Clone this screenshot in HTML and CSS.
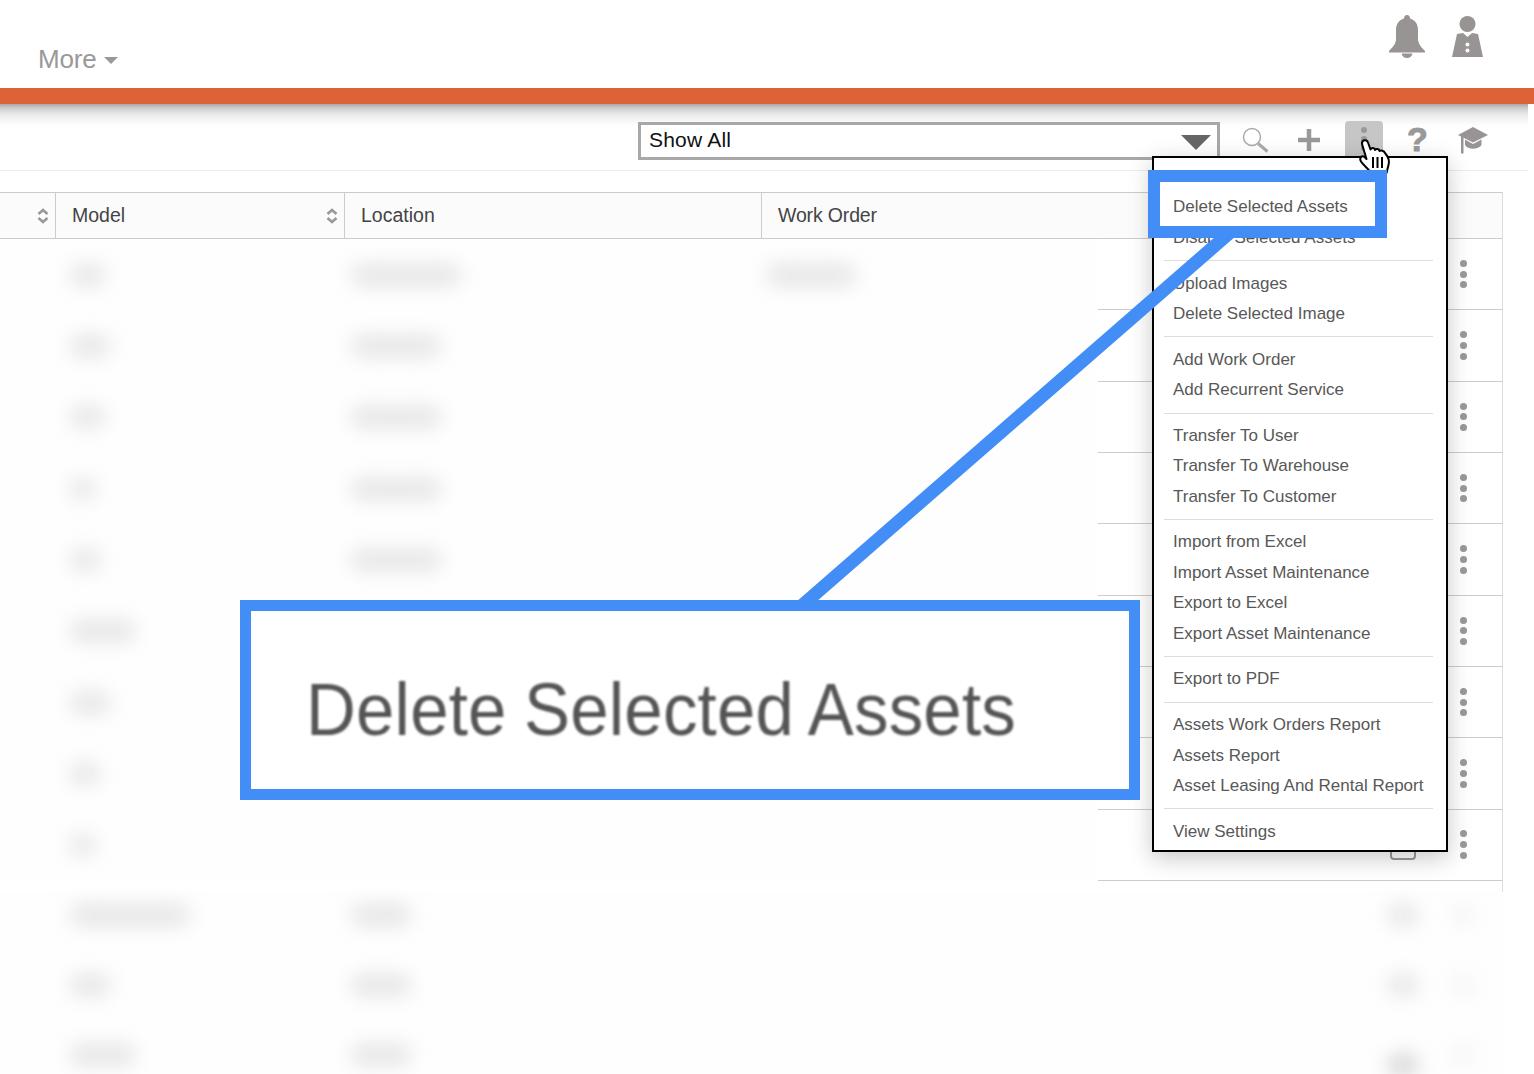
FILE: index.html
```html
<!DOCTYPE html>
<html lang="en">
<head>
<meta charset="utf-8">
<title>Assets</title>
<link rel="stylesheet" href="styles.css">
</head>
<body>
<div class="page">
  <header class="topbar">
    <div class="more">More <span class="caret"></span></div>
    <div class="top-icons">
      <svg class="bell" width="36" height="43" viewBox="0 0 36 43"><path d="M18 0C20 0 21 1.500 21 3.500C26 5 29 9 29 15L29 24C29 29 33 33 36 36L36 37.500L0 37.500L0 36C3 33 7 29 7 24L7 15C7 9 10 5 15 3.500C15 1.500 16 0 18 0Z"/><path d="M12.500 38.500H23.500C23 41 21 43 18 43C15 43 13 41 12.500 38.500Z"/></svg>
      <svg class="user" width="31" height="41" viewBox="0 0 31 41"><circle cx="15.500" cy="8" r="8"/><path d="M5 18L11 17L15.500 21L20 17L26 18L31 41H0Z"/><circle class="hole" cx="15.500" cy="28.500" r="2"/><circle class="hole" cx="15.500" cy="34.500" r="2"/></svg>
    </div>
  </header>
  <div class="accent"></div>
  <div class="toolbar">
    <div class="select"><span>Show All</span><span class="select-arrow"></span></div>
    <svg class="tool search" width="27" height="26" viewBox="0 0 27 26"><circle cx="10" cy="10" r="8.500"/><path d="M16 16.500L25.500 24.500"/></svg>
    <svg class="tool plus" width="24" height="24" viewBox="0 0 24 24"><path d="M12 1V23M1 12H23"/></svg>
    <div class="tool kebab-btn"><i></i><i></i><i></i></div>
    <span class="tool help">?</span>
    <svg class="tool cap" width="30" height="27" viewBox="0 0 30 27"><path d="M15 0L30 8L15 15.500L0 8Z"/><path d="M7 12.500L15 17L23.500 12.500V18C20 23 10 23 7 18Z"/><path d="M3 9H5.500V26.500H3Z"/></svg>
  </div>
  <section class="table">
    <div class="thead">
      <div class="th"><svg class="sort" width="12" height="16" viewBox="0 0 12 16"><path d="M1.500 6L6 2L10.500 6M1.500 10L6 14L10.500 10"/></svg></div>
      <div class="th">Model<svg class="sort" width="12" height="16" viewBox="0 0 12 16"><path d="M1.500 6L6 2L10.500 6M1.500 10L6 14L10.500 10"/></svg></div>
      <div class="th">Location</div>
      <div class="th">Work Order</div>
    </div>

    <div class="row"><div></div><div class="c-model"><b class="blob w35"></b></div><div class="c-loc"><b class="blob w110"></b></div><div class="c-wo"><b class="blob w90"></b></div><div class="c-act"><span class="act"></span><span class="dots"><i></i><i></i><i></i></span></div></div>
    <div class="row"><div></div><div class="c-model"><b class="blob w40"></b></div><div class="c-loc"><b class="blob w90"></b></div><div></div><div class="c-act"><span class="act"></span><span class="dots"><i></i><i></i><i></i></span></div></div>
    <div class="row"><div></div><div class="c-model"><b class="blob w35"></b></div><div class="c-loc"><b class="blob w90"></b></div><div></div><div class="c-act"><span class="act"></span><span class="dots"><i></i><i></i><i></i></span></div></div>
    <div class="row"><div></div><div class="c-model"><b class="blob w25"></b></div><div class="c-loc"><b class="blob w90"></b></div><div></div><div class="c-act"><span class="act"></span><span class="dots"><i></i><i></i><i></i></span></div></div>
    <div class="row"><div></div><div class="c-model"><b class="blob w30"></b></div><div class="c-loc"><b class="blob w90"></b></div><div></div><div class="c-act"><span class="act"></span><span class="dots"><i></i><i></i><i></i></span></div></div>
    <div class="row"><div></div><div class="c-model"><b class="blob w65"></b></div><div class="c-loc"></div><div></div><div class="c-act"><span class="act"></span><span class="dots"><i></i><i></i><i></i></span></div></div>
    <div class="row"><div></div><div class="c-model"><b class="blob w40"></b></div><div class="c-loc"></div><div></div><div class="c-act"><span class="act"></span><span class="dots"><i></i><i></i><i></i></span></div></div>
    <div class="row"><div></div><div class="c-model"><b class="blob w30"></b></div><div class="c-loc"></div><div></div><div class="c-act"><span class="act"></span><span class="dots"><i></i><i></i><i></i></span></div></div>
    <div class="row"><div></div><div class="c-model"><b class="blob w25"></b></div><div class="c-loc"></div><div></div><div class="c-act"><span class="act"></span><span class="dots"><i></i><i></i><i></i></span></div></div>

    <div class="spacer"></div>
    <div class="row tail"><div></div><div class="c-model"><b class="blob w120"></b></div><div class="c-loc"><b class="blob w60"></b></div><div></div><div class="c-blur"><b class="blob w30"></b><b class="blob w20 faint"></b></div></div>
    <div class="row tail"><div></div><div class="c-model"><b class="blob w40"></b></div><div class="c-loc"><b class="blob w60"></b></div><div></div><div class="c-blur"><b class="blob w30"></b><b class="blob w20 faint"></b></div></div>
    <div class="row tail"><div></div><div class="c-model"><b class="blob w65"></b></div><div class="c-loc"><b class="blob w60"></b></div><div></div><div class="c-blur"><b class="blob w30 dark"></b><b class="blob w20 faint"></b></div></div>
  </section>

  <nav class="menu">
    <a>Edit Selected Assets</a>
    <a>Delete Selected Assets</a>
    <a>Disable Selected Assets</a>
    <hr>
    <a>Upload Images</a>
    <a>Delete Selected Image</a>
    <hr>
    <a>Add Work Order</a>
    <a>Add Recurrent Service</a>
    <hr>
    <a>Transfer To User</a>
    <a>Transfer To Warehouse</a>
    <a>Transfer To Customer</a>
    <hr>
    <a>Import from Excel</a>
    <a>Import Asset Maintenance</a>
    <a>Export to Excel</a>
    <a>Export Asset Maintenance</a>
    <hr>
    <a>Export to PDF</a>
    <hr>
    <a>Assets Work Orders Report</a>
    <a>Assets Report</a>
    <a>Asset Leasing And Rental Report</a>
    <hr>
    <a>View Settings</a>
  </nav>

  <svg class="hand" width="34" height="36" viewBox="0 0 34 36"><path class="hand-body" d="M4 6C3.500 1.500 9 1 10 4.500L12.500 11.500C13.500 9.500 16.500 9.500 17 12C18 10.500 21 10.500 21.500 13C23 12 26 12.500 27 15C29.500 18 32 22.500 30.500 27L28.500 35H13C10.500 30.500 5.500 27.500 3 23.500C1 20 3.500 17 6.500 19L8.500 21Z"/><path class="hand-lines" d="M15 19V30M19.500 19V30M24 19V30"/></svg>

  <svg class="connector" width="460" height="380" viewBox="0 0 460 380"><polygon points="438,0 458,0 38,366 18,366"/></svg>
  <div class="mark"></div>
  <div class="callout"><span>Delete Selected Assets</span></div>
</div>
</body>
</html>
```
FILE: styles.css
```css
* { box-sizing: border-box; }
html, body { margin: 0; padding: 0; background: #fff; }
body { font-family: "Liberation Sans", Arial, sans-serif; color: #444; }
.page { position: relative; width: 1534px; height: 1074px; overflow: hidden; background: #fff; }

/* top bar */
.topbar { height: 88px; display: flex; justify-content: space-between; padding: 15px 51px 0 38px; }
.more { margin-top: 27px; height: 34px; font-size: 26px; line-height: 34px; color: #999; display: flex; align-items: center; gap: 8px; letter-spacing: -0.2px; }
.caret { width: 0; height: 0; border-left: 7.500px solid transparent; border-right: 7.500px solid transparent; border-top: 7.500px solid #999; margin-top: 3px; }
.top-icons { display: flex; gap: 27px; align-items: flex-start; }
.bell, .user { fill: #989494; }
.user { margin-top: 1px; }
.hole { fill: #fff; }
.accent { height: 16px; background: #dd6336; }

/* toolbar */
.toolbar { height: 67px; width: 1528px; border-bottom: 1px solid #ececec; display: flex; align-items: flex-start; padding: 17px 0 0 638px; background: linear-gradient(#a8a8a8, #cdcdcd 4px, #ececec 11px, #fff 22px); }
.select { width: 582px; height: 38px; margin-top: 1px; border: 3px solid #a8a8a8; display: flex; align-items: center; justify-content: space-between; padding: 0 6px 2px 8px; font-size: 21px; letter-spacing: .2px; color: #111; background: #fff; }
.select-arrow { width: 0; height: 0; border-left: 15px solid transparent; border-right: 15px solid transparent; border-top: 15px solid #666; margin-top: 5px; }
.tool { flex: none; }
.search { margin: 6px 0 0 22px; fill: none; stroke: #aaa; stroke-width: 1.500; }
.search path { stroke-width: 3; }
.plus { margin: 7px 0 0 28px; fill: none; stroke: #999; stroke-width: 4.500; }
.kebab-btn { width: 38px; height: 49px; margin-left: 24px; background: #c6c6c6; border-radius: 4px 4px 0 0; display: flex; flex-direction: column; align-items: center; gap: 3px; padding-top: 6px; }
.kebab-btn i { width: 6px; height: 6px; border-radius: 50%; background: #999; }
.help { width: 20px; margin: -1px 0 0 24px; font-size: 34px; line-height: 38px; font-weight: 700; color: #999; text-align: center; -webkit-text-stroke: 1px #999; }
.cap { margin: 6px 0 0 31px; fill: #989494; }

/* table */
.table { width: 1503px; margin-top: 21px; }
.thead { display: grid; grid-template-columns: 56px 289px 417px 1fr; height: 47px; border-top: 1px solid #ccc; border-bottom: 1px solid #ccc; border-right: 1px solid #ddd; background: #fbfbfb; font-size: 19.500px; color: #444; }
.th { display: flex; align-items: center; justify-content: space-between; padding: 0 6px 0 16px; border-right: 1px solid #ccc; }
.th:first-child { justify-content: flex-end; }
.th:last-child { border-right: 0; letter-spacing: -.15px; }
.sort { fill: none; stroke: #999; stroke-width: 2.600; }

.row { display: grid; grid-template-columns: 56px 289px 417px 336px 405px; height: 71.330px; align-items: center; }
.row > div { height: 100%; display: flex; align-items: center; background: #fefefe; }
.row > .c-act { background: #fff; border-bottom: 1px solid #ccc; border-right: 1px solid #ddd; justify-content: flex-end; gap: 44px; padding: 0 35px 0 0; }
.c-model { padding-left: 14px; }
.c-loc { padding-left: 6px; }
.c-wo { padding-left: 4px; }
.act { width: 26px; height: 24px; border: 2px solid #999; border-radius: 4px; margin-top: 7px; }
.dots { display: flex; flex-direction: column; gap: 3.800px; }
.dots i { width: 7px; height: 7px; border-radius: 50%; background: #999; }

.blob { display: block; height: 20px; background: #e3e3e3; border-radius: 10px; filter: blur(10px); }
.w20 { width: 20px; } .w25 { width: 25px; } .w30 { width: 30px; } .w35 { width: 35px; }
.w40 { width: 40px; } .w60 { width: 60px; } .w65 { width: 65px; } .w90 { width: 90px; }
.w110 { width: 110px; } .w120 { width: 120px; }
.faint { background: #f2f2f2; }
.dark { background: #cfcfcf; margin-top: 10px; }

.spacer { height: 11px; width: 405px; margin-left: 1098px; border-right: 1px solid #ddd; }
.row.tail { height: 70px; }
.row.tail > div { align-items: flex-start; padding-top: 13px; }
.row.tail > .c-blur { justify-content: flex-end; gap: 35px; padding-right: 30px; }

/* dropdown */
.menu { position: absolute; left: 1152px; top: 156px; width: 296px; height: 696px; border: 2px solid #000; background: #fff; box-shadow: 0 6px 22px rgba(0, 0, 0, .22); padding: 4px 13px 0 19px; font-size: 17px; color: #585858; }
.menu a { display: block; height: 30.400px; line-height: 30.400px; white-space: nowrap; }
.menu hr { border: 0; height: 1px; background: #ddd; margin: 7px 0 7.400px -9px; }

.hand { position: absolute; left: 1358px; top: 138px; }
.hand-body { fill: #fff; stroke: #000; stroke-width: 2; stroke-linejoin: round; }
.hand-lines { fill: none; stroke: #000; stroke-width: 2; }

/* annotation */
.connector { position: absolute; left: 778px; top: 236px; fill: #428df6; }
.mark { position: absolute; left: 1148px; top: 170px; width: 239px; height: 68px; border: 12px solid #428df6; }
.callout { position: absolute; left: 240px; top: 600px; width: 900px; height: 200px; border: 11.500px solid #428df6; background: #fff; display: flex; align-items: center; padding: 18px 0 0 55px; }
.callout span { font-size: 69px; letter-spacing: .2px; word-spacing: -2px; line-height: 1; color: #555; white-space: nowrap; filter: blur(1px); transform: scaleY(1.070); }
```
